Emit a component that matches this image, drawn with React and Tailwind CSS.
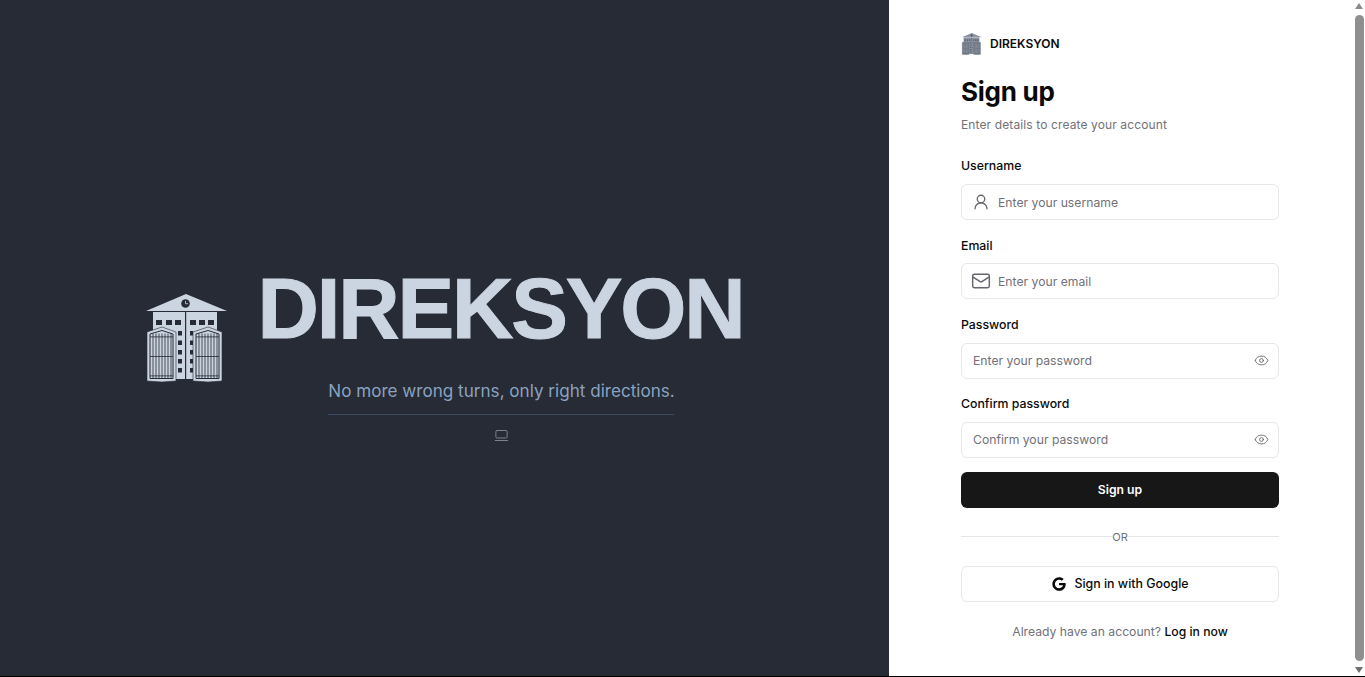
import { Eye, LaptopMinimal, Mail, UserRound } from 'lucide-react'
import { FaGoogle } from 'react-icons/fa'

const font = { fontFamily: 'Inter, "Noto Sans", sans-serif' }

function BuildingLogo({ className, body = '#cbd5e1', ink = '#262b36' }) {
  const topWindows = [10, 20, 29, 44, 53, 62]
  const sideWindows = [37, 46.5, 56, 65, 74]
  const doors = [1, 47]
  return (
    <svg viewBox="0 0 82 89" className={className}>
      <path d="M40 0 L81 17 L0 17 Z" fill={body} />
      <circle cx="39.5" cy="9.5" r="4.3" fill={ink} />
      <path d="M39.5 6.8 V9.7 H42" stroke={body} strokeWidth="0.8" fill="none" />
      <rect x="7" y="18" width="64" height="67" fill={body} />
      <rect x="39" y="18" width="1.2" height="68" fill={ink} />
      {topWindows.map(x => (
        <rect key={x} x={x} y="26" width="6" height="5" fill={ink} />
      ))}
      {sideWindows.map(y => (
        <g key={y}>
          <rect x="32" y={y} width="4" height="4.5" fill={ink} />
          <rect x="44" y={y} width="3" height="4.5" fill={ink} />
        </g>
      ))}
      {doors.map(x => (
        <g key={x}>
          <path
            d={`M${x} 38 L${x + 15} 33 L${x + 29} 38 V87 L${x + 15} 88 L${x} 87 Z`}
            fill={body}
            stroke={ink}
            strokeWidth="0.6"
          />
          <path
            d={`M${x + 3} 40 L${x + 15} 36.5 L${x + 26} 40 V84.5 H${x + 3} Z`}
            fill={body}
            stroke={ink}
            strokeWidth="1"
          />
          {Array.from({ length: 7 }).map((_, i) => (
            <rect key={i} x={x + 5.6 + i * 3} y="39.5" width="0.8" height="45" fill={ink} />
          ))}
          <rect x={x + 3} y="42.5" width="23" height="0.8" fill={ink} />
          <rect x={x + 3} y="62" width="23" height="0.8" fill={ink} />
          <rect x={x + 3} y="81.5" width="23" height="0.8" fill={ink} />
        </g>
      ))}
    </svg>
  )
}

function Field({ label, icon, placeholder, trailing }) {
  return (
    <div>
      <label className="block h-5 text-[12.3px] leading-[21px] font-medium text-[#0a0a0a]">{label}</label>
      <div className="mt-[8.8px] flex h-9 items-center rounded-md border border-[#e5e7eb] bg-white">
        {icon && <span className="flex w-9 shrink-0 justify-center pl-[2px] text-[#66666d]">{icon}</span>}
        <input
          type="text"
          placeholder={placeholder}
          className={`min-w-0 flex-1 bg-transparent pt-[1.4px] text-[12.2px] text-[#3f3f46] outline-none placeholder:text-[#71717a] ${icon ? '' : 'pl-[11px]'}`}
        />
        {trailing && <span className="flex w-9 shrink-0 justify-center pl-[2px] text-[#6b6b70]">{trailing}</span>}
      </div>
    </div>
  )
}

function Scrollbar() {
  return (
    <div className="flex w-3 shrink-0 flex-col items-center bg-white">
      <div className="mt-[3px] h-0 w-0 border-x-[4px] border-b-[6px] border-x-transparent border-b-[#8a8a8a]" />
      <div className="mt-[6px] w-[9px] flex-1 rounded-[5px] bg-[#8f8f8f]" />
      <div className="mt-[6px] mb-[3px] h-0 w-0 border-x-[4px] border-t-[6px] border-x-transparent border-t-[#6f6f6f]" />
    </div>
  )
}

export default function App() {
  return (
    <div className="flex h-[677px] flex-col overflow-hidden" style={font}>
      <div className="flex min-h-0 flex-1">
        {/* Brand panel */}
        <div className="flex w-[889px] shrink-0 flex-col items-center justify-center bg-[#262b36] pt-[27px] pl-[3px]">
          <div className="flex items-start gap-[29px]">
            <BuildingLogo className="mt-[33px] h-[89px] w-[82px]" />
            <div className="flex flex-col items-center">
              <h1 className="mt-[3px] pr-[2px] font-['Liberation_Sans',sans-serif] text-[85px] leading-[90px] font-bold tracking-[-0.025em] text-[#cbd5e1] [-webkit-text-stroke:1px_#cbd5e1]">DIREKSYON</h1>
              <p className="mt-[25px] text-[17.1px] leading-6 text-[#8aa2bf]">No more wrong turns, only right directions.</p>
              <div className="mt-[11px] h-px w-[346px] bg-[#3b4a63]" />
              <LaptopMinimal size={15} strokeWidth={1.5} className="mt-[13px] ml-[1px] text-[#82868f]" />
            </div>
          </div>
        </div>

        {/* Sign up form */}
        <div className="min-w-0 flex-1 bg-white pt-[33px] pl-[72px]">
          <div className="flex w-[318px] flex-col">
            <div className="flex h-[22px] items-center gap-[7px]">
              <BuildingLogo className="h-[22px] w-[22px]" body="#8d94a1" ink="#4b5563" />
              <span className="text-xs font-semibold text-[#0a0a0a]">DIREKSYON</span>
            </div>
            <h2 className="mt-[20px] text-[26px] leading-[34px] font-bold tracking-[-0.01em] text-[#0a0a0a]">Sign up</h2>
            <p className="mt-[6px] text-xs leading-5 tracking-[0.01em] text-[#71717a]">Enter details to create your account</p>
            <div className="mt-[20.2px] flex flex-col gap-[14.53px]">
              <Field label="Username" icon={<UserRound size={18} strokeWidth={1.75} />} placeholder="Enter your username" />
              <Field label="Email" icon={<Mail size={20} strokeWidth={1.75} />} placeholder="Enter your email" />
              <Field label="Password" placeholder="Enter your password" trailing={<Eye size={15} strokeWidth={1.5} />} />
              <Field label="Confirm password" placeholder="Confirm your password" trailing={<Eye size={15} strokeWidth={1.5} />} />
            </div>
            <button className="mt-[14px] h-9 rounded-md bg-[#171717] text-[12.2px] font-semibold text-white">Sign up</button>
            <div className="mt-[21px] flex h-[16px] items-center">
              <div className="h-px flex-1 bg-[#e5e7eb]" />
              <span className="text-[11px] text-[#71717a]">OR</span>
              <div className="h-px flex-1 bg-[#e5e7eb]" />
            </div>
            <button className="mt-[21px] flex h-9 items-center justify-center gap-[8px] rounded-md border border-[#e5e7eb] bg-white pl-[1px] text-[12.4px] font-medium text-[#0a0a0a]">
              <FaGoogle size={14} />
              Sign in with Google
            </button>
            <p className="mt-[20px] text-center text-[12.2px] leading-5 text-[#71717a]">
              Already have an account? <a className="font-medium text-[#0a0a0a]">Log in now</a>
            </p>
          </div>
        </div>
        <Scrollbar />
      </div>
      <div className="h-px shrink-0 bg-black" />
    </div>
  )
}
